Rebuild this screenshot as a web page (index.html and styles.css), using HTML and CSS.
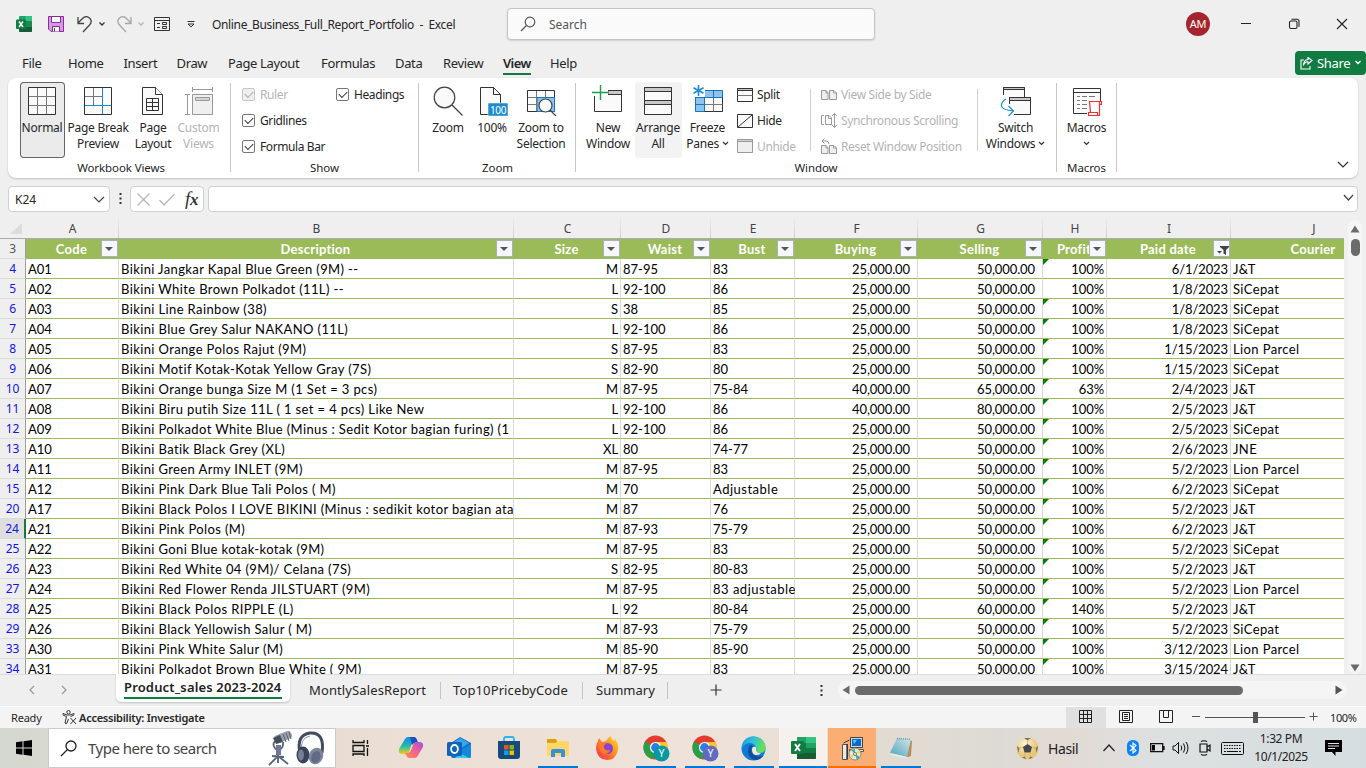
FILE: index.html
```html
<!DOCTYPE html>
<html lang="en">
<head>
<meta charset="utf-8">
<title>Online_Business_Full_Report_Portfolio - Excel</title>
<link rel="stylesheet" href="styles.css">
</head>
<body>
<header class="titlebar">
  <div class="quick">
    <svg class="q-excel" width="16" height="16" viewBox="0 0 16 16"><rect x="3" width="13" height="16" rx="1" fill="#21a366"/><path d="M9.500 0H15q1 0 1 1v4H9.500z" fill="#33c481"/><path d="M3 5h6.500v6H3z" fill="#107c41"/><path d="M9.500 5H16v6H9.500z" fill="#107c41" opacity=".55"/><path d="M3 11h13v4q0 1-1 1H4q-1 0-1-1z" fill="#185c37"/><rect y="3.500" width="10" height="9.500" rx="1" fill="#107c41"/><path d="M3 5.500l4 5.500M7 5.500L3 11" stroke="#fff" stroke-width="1.500"/></svg>
    <svg class="q-save" width="16" height="16" viewBox="0 0 16 16"><path d="M.5.5h15v15H3L.5 13z" fill="#d69adf" stroke="#8a2b9c"/><path d="M3.500.5h9v6h-9zM4.500 15.500v-5h7v5" fill="#fafafa" stroke="#8a2b9c"/><path d="M6.500 12v3.500" stroke="#8a2b9c"/></svg>
    <svg class="q-undo" width="16" height="17" viewBox="0 0 16 17" fill="none" stroke="#444" stroke-width="1.300"><path d="M1 1v6.500h6M1 7L5.500 2.500C8 0 11 0 13 2.500s1.500 4.500-.5 6.500L6 16"/></svg>
    <svg class="q-c1" width="8" height="6" viewBox="0 0 8 6" fill="none" stroke="#333" stroke-width="1.300"><path d="M1.500 1.500L4 4l2.500-2.500"/></svg>
    <svg class="q-redo" width="16" height="17" viewBox="0 0 16 17" fill="none" stroke="#a6a6a6" stroke-width="1.300"><path d="M14 1v6.500H8M14 7L9.500 2.500C7 0 4 0 2 2.500S.5 7 2.500 9L9 16"/></svg>
    <svg class="q-c2" width="8" height="6" viewBox="0 0 8 6" fill="none" stroke="#b5b5b5" stroke-width="1.300"><path d="M1.500 1.500L4 4l2.500-2.500"/></svg>
    <svg class="q-form" width="16" height="14" viewBox="0 0 16 14" fill="none" stroke="#333"><path d="M.5.5h15v13H.5zM.5 3.500h15M3 6.500h3M3 10.500h3M8.500 5.500h4v2h-4zM8.500 9.500h4v2h-4z"/></svg>
    <svg class="q-cust" width="8" height="7" viewBox="0 0 8 7" fill="none" stroke="#333"><path d="M.5.5h7M1 3l3 3 3-3z"/></svg>
    <span class="doc-title">Online_Business_Full_Report_Portfolio&nbsp; -&nbsp; Excel</span>
  </div>
  <div class="search"><svg width="16" height="16" viewBox="0 0 16 16" fill="none" stroke="#555" stroke-width="1.200"><circle cx="10" cy="6" r="4.800"/><path d="M6.500 9.500L1 15"/></svg><span>Search</span></div>
  <div class="win">
    <span class="avatar">AM</span>
    <svg class="wb" width="48" height="20" viewBox="0 0 48 20" fill="none" stroke="#222" stroke-width="1"><path d="M19 9.500h10"/></svg>
    <svg class="wb" width="48" height="20" viewBox="0 0 48 20" fill="none" stroke="#222" stroke-width="1.100"><rect x="19.500" y="7" width="7.500" height="7.500" rx="1.500"/><path d="M21.500 5.300H27q2 0 2 2v5.500"/></svg>
    <svg class="wb" width="48" height="20" viewBox="0 0 48 20" fill="none" stroke="#222" stroke-width="1.100"><path d="M19 5l10 10M29 5L19 15"/></svg>
  </div>
</header>

<nav class="tabs">
  <span class="tab w0">File</span><span class="tab w1">Home</span><span class="tab w2">Insert</span><span class="tab w3">Draw</span><span class="tab w4">Page Layout</span><span class="tab w5">Formulas</span><span class="tab w6">Data</span><span class="tab w7">Review</span><span class="tab w8 on">View</span><span class="tab w9">Help</span>
  <span class="share"><svg width="13" height="13" viewBox="0 0 13 13" fill="none" stroke="#fff" stroke-width="1.100"><path d="M4 3H1v9h9V9M3.500 8.500Q4 5 8 4.800V7l4-3.500L8 .5v2Q3.500 3 3.500 8.500z"/></svg>Share<svg width="8" height="6" viewBox="0 0 8 6" fill="none" stroke="#fff" stroke-width="1.300"><path d="M1.500 1L4 3.500 6.500 1"/></svg></span>
</nav>

<section class="ribbon">
  <div class="group g-views">
    <div class="tools">
      <div class="btn sel b45"><svg width="32" height="32" viewBox="0 0 32 32"><path d="M2.500 3.500h27v27h-27z" fill="#fafafa" stroke="#333"/><path d="M11.500 4v26M20.500 4v26M3 12.500h26M3 21.500h26" stroke="#777"/></svg><span>Normal</span></div>
      <div class="btn b66"><svg width="32" height="32" viewBox="0 0 32 32"><path d="M2.500 3.500h27v27h-27z" fill="#fafafa" stroke="#333"/><path d="M11.500 4v17M3 12.500h17" stroke="#777"/><path d="M20.500 4v26M3 21.500h26" stroke="#1e8bd0"/></svg><span>Page Break<br>Preview</span></div>
      <div class="btn b44"><svg width="32" height="32" viewBox="0 0 32 32" fill="#fafafa" stroke="#333"><path d="M5.500 3.500h13l7 7v20h-20z"/><path d="M18.500 3.500v7h7" /><path d="M9.500 14.500h12v12h-12zM9.500 18.500h12M9.500 22.500h12M15.500 14.500v12" fill="none"/></svg><span>Page<br>Layout</span></div>
      <div class="btn dis b47"><svg width="32" height="32" viewBox="0 0 32 32" fill="none" stroke="#999"><path d="M9.500 10.500h20v20h-20z" fill="#efefef"/><path d="M12.500 13.500h14v3h-14z" fill="#d5d5d5"/><path d="M9.500 5.500h20M9.500 3v5M29.500 3v5M4.500 10.500v20M2 10.500h5M2 30.500h5"/></svg><span>Custom<br>Views</span></div>
    </div>
    <div class="caption">Workbook Views</div>
  </div>
  <div class="group g-show">
    <div class="checks">
      <label class="ck off"><i></i>Ruler</label><label class="ck"><i></i>Headings</label>
      <label class="ck"><i></i>Gridlines</label><span></span>
      <label class="ck"><i></i>Formula Bar</label>
    </div>
    <div class="caption">Show</div>
  </div>
  <div class="group g-zoom">
    <div class="tools">
      <div class="btn b44"><svg width="32" height="32" viewBox="0 0 32 32" fill="#fafafa" stroke="#444" stroke-width="1.200"><circle cx="12.500" cy="13.500" r="10.300"/><path d="M20 21l10.500 10.500"/></svg><span>Zoom</span></div>
      <div class="btn b44"><svg width="32" height="32" viewBox="0 0 32 32"><path d="M4.500 3.500h13l7 7v20h-20z" fill="#fafafa" stroke="#333"/><path d="M17.500 3.500v7h7" fill="none" stroke="#333"/><rect x="12" y="19" width="20" height="13" fill="#1e8bcd" stroke="#fff" stroke-width=".5"/><text x="22" y="29.500" class="t100">100</text></svg><span>100%</span></div>
      <div class="btn b54"><svg width="32" height="32" viewBox="0 0 32 32"><path d="M2.500 6.500h27v21h-27z" fill="#fafafa" stroke="#333"/><path d="M12 13.500h17.500v14H12z" fill="#8fc3ee" stroke="#1476be"/><path d="M11.500 7v20M20.500 7v7M3 13.500h8M3 20.500h8" stroke="#777" /><circle cx="20.500" cy="21.500" r="6.500" fill="#fafafa" stroke="#444" stroke-width="1.200"/><path d="M25 26l6 6" stroke="#444" stroke-width="1.300"/></svg><span>Zoom to<br>Selection</span></div>
    </div>
    <div class="caption">Zoom</div>
  </div>
  <div class="group g-window">
    <div class="tools">
      <div class="btn b50"><svg width="32" height="32" viewBox="0 0 32 32"><path d="M2.500 6.500h27v21h-27z" fill="#fafafa" stroke="#333"/><path d="M16 6.500h13.500v4H16z" fill="#c8c8c8" stroke="#333"/><path d="M0 0h16v12H0z" fill="#fff"/><path d="M2.500 12v4" stroke="#333"/><path d="M8.500 1v15M0 8.500h16" stroke="#1aa04a" stroke-width="1.400"/></svg><span>New<br>Window</span></div>
      <div class="btn hov b47"><svg width="32" height="32" viewBox="0 0 32 32" fill="#fafafa" stroke="#333"><path d="M2.500 3.500h27v13h-27zM2.500 16.500h27v14h-27z"/><path d="M2.500 3.500h27v4h-27zM2.500 16.500h27v4h-27z" fill="#c8c8c8"/></svg><span>Arrange<br>All</span></div>
      <div class="btn b52"><svg width="32" height="32" viewBox="0 0 32 32"><path d="M3.500 6.500h27v21h-27z" fill="#8fc3ee" stroke="#1476be"/><path d="M12.500 13.500h18v14h-18z" fill="#fafafa" stroke="#333"/><path d="M21.500 13.500v14M12.500 20.500h18" stroke="#777"/><path d="M21.500 6.500v7M3.500 13.500h27M3.500 20.500h9M12.500 7v20" stroke="#1476be" fill="none"/><path d="M0 0h13v13H0z" fill="#fff"/><path d="M6.500 1v11M1.500 3.800l10 5.500M11.500 3.800l-10 5.500" stroke="#1e8bd0" stroke-width="1.600"/></svg><span>Freeze<br>Panes <svg class="cv" width="7" height="5" viewBox="0 0 7 5"><path d="M1 1l2.500 2.500L6 1"/></svg></span></div>
      <div class="list l-split">
        <div><svg width="16" height="16" viewBox="0 0 16 16" fill="#fafafa" stroke="#333"><path d="M.5 1.500h15v13H.5z"/><path d="M.5 1.500h15v2H.5z" fill="#c8c8c8"/><path d="M.5 8.500h15" stroke="#777"/></svg>Split</div>
        <div><svg width="16" height="16" viewBox="0 0 16 16" fill="#fafafa" stroke="#333"><path d="M.5 1.500h15v13H.5zM1 14L15 2"/></svg>Hide</div>
        <div class="dis"><svg width="16" height="16" viewBox="0 0 16 16" fill="#efefef" stroke="#999"><path d="M.5 1.500h15v13H.5z"/><path d="M.5 1.500h15v2H.5z" fill="#d0d0d0"/></svg>Unhide</div>
      </div>
      <div class="list l-side dis">
        <div><svg width="16" height="16" viewBox="0 0 16 16" fill="#efefef" stroke="#999"><path d="M.5 3.500H5l2 2v7H.5zM8.500 3.500H13l2.500 2.500v6.500h-7zM5 3.500V6h2M12.500 3.500V6h3"/></svg>View Side by Side</div>
        <div><svg width="16" height="16" viewBox="0 0 16 16" fill="none" stroke="#999"><path d="M3 2.500H.5v9H3M4.500 2.500H8L10.500 5v6.500h-6zM7.500 2.500v3h3M13.500.5v14M11 3l2.500-2.500L16 3M11 12l2.500 2.500L16 12"/></svg>Synchronous Scrolling</div>
        <div><svg width="16" height="16" viewBox="0 0 16 16" fill="#efefef" stroke="#999"><path d="M.5 7.500H5l2 2v6H.5zM8.500 7.500H13l2.500 2.500v5.500h-7zM5 7.500V10h2M12.500 7.500V10h3"/><path d="M3.500.5L1 3l2.500 2.500M1 3h4q3 0 3 3" fill="none"/></svg>Reset Window Position</div>
      </div>
      <div class="btn b77"><svg width="32" height="32" viewBox="0 0 32 32"><path d="M3.500 3.500h21v12h-21z" fill="#fafafa" stroke="#333"/><path d="M3.500 3.500h21v2h-21z" fill="#c8c8c8" stroke="#333"/><path d="M0 11h9v20H0z" fill="#fff"/><path d="M9.500 13.500h21v17h-21z" fill="#fafafa" stroke="#333"/><path d="M9.500 13.500h21v3h-21z" fill="#c8c8c8" stroke="#333"/><path d="M8 20h6v12H8z" fill="#fff"/><path d="M6 15Q1 18 1.500 22t12 5M8.500 22l5 5-5 5" fill="none" stroke="#1e8bd0" stroke-width="1.200"/></svg><span>Switch<br>Windows <svg class="cv" width="7" height="5" viewBox="0 0 7 5"><path d="M1 1l2.500 2.500L6 1"/></svg></span></div>
    </div>
    <div class="caption">Window</div>
  </div>
  <div class="group g-macros">
    <div class="tools">
      <div class="btn b59"><svg width="32" height="32" viewBox="0 0 32 32"><path d="M2.500 4.500h27v25h-27z" fill="#fafafa" stroke="#333"/><path d="M2.500 8.500h27" stroke="#333"/><path d="M6 12.500h3M11 12.500h5M18 12.500h6M6 16.500h3M11 16.500h5M6 20.500h3M11 20.500h5M6 24.500h3M11 24.500h5" stroke="#777"/><path d="M16 27h16v6H16zM28 17h4v12h-4z" fill="#fff"/><path d="M18.500 17.500h12v3h-2v11h-11v-3h2z M28.500 20V17.500M17.500 28.500h9v3" fill="#fff" stroke="#e33" stroke-width="1.200"/></svg><span>Macros<br><svg class="cv" width="7" height="5" viewBox="0 0 7 5"><path d="M1 1l2.500 2.500L6 1"/></svg></span></div>
    </div>
    <div class="caption">Macros</div>
  </div>
  <svg class="collapse" width="12" height="7" viewBox="0 0 12 7" fill="none" stroke="#333" stroke-width="1.200"><path d="M1 1l5 5 5-5"/></svg>
</section>

<section class="formula">
  <div class="namebox"><span>K24</span><svg width="12" height="7" viewBox="0 0 12 7" fill="none" stroke="#444" stroke-width="1.200"><path d="M1 1l5 5 5-5"/></svg></div>
  <svg class="fdots" width="3" height="12" viewBox="0 0 3 12" fill="#333"><path d="M.5 0h2v2h-2zM.5 4.500h2v2h-2zM.5 9h2v2h-2z"/></svg>
  <div class="fbtns"><svg width="13" height="13" viewBox="0 0 13 13" stroke="#b5b5b5" stroke-width="1.200"><path d="M.5.5l12 12M12.500.5l-12 12"/></svg><svg width="16" height="13" viewBox="0 0 16 13" fill="none" stroke="#b5b5b5" stroke-width="1.200"><path d="M.5 7L5 12 15.500 1"/></svg><span class="fx"><em>f</em>x</span></div>
  <div class="finput"><svg width="12" height="7" viewBox="0 0 12 7" fill="none" stroke="#444" stroke-width="1.200"><path d="M1 1l4.500 5L10 1"/></svg></div>
</section>

<main class="sheet">
  <div class="view"><table class="grid" id="grid">
    <colgroup><col class="cR"><col class="cA"><col class="cB"><col class="cC"><col class="cD"><col class="cE"><col class="cF"><col class="cG"><col class="cH"><col class="cI"><col class="cJ"></colgroup>
    <thead>
      <tr class="letters"><th><svg width="12" height="12" viewBox="0 0 12 12"><path d="M12 0v11H0z" fill="#dcdcdc"/></svg></th><th>A</th><th>B</th><th>C</th><th>D</th><th>E</th><th>F</th><th>G</th><th>H</th><th>I</th><th>J</th></tr>
    </thead>
    <tbody></tbody>
  </table></div>
  <div class="vscroll"><svg width="10" height="8" viewBox="0 0 10 8"><path d="M5 .5L9.500 7.500h-9z" fill="#6b6b6b"/></svg><i></i><svg class="dn" width="10" height="8" viewBox="0 0 10 8"><path d="M5 7.500L9.500.5h-9z" fill="#6b6b6b"/></svg></div>
</main>

<section class="sheettabs">
  <div class="arrows"><svg width="8" height="10" viewBox="0 0 8 10"><path d="M6 1L2 5l4 4"/></svg><svg width="8" height="10" viewBox="0 0 8 10"><path d="M2 1l4 4-4 4"/></svg></div>
  <div class="st act"><span>Product_sales 2023-2024</span></div>
  <div class="st s1">MontlySalesReport</div><div class="st s2">Top10PricebyCode</div><div class="st s3">Summary</div>
  <svg class="plus" width="12" height="12" viewBox="0 0 12 12" stroke="#333" stroke-width="1.200"><path d="M6 .5v11M.5 6h11"/></svg>
  <svg class="hdots" width="3" height="12" viewBox="0 0 3 12" fill="#333"><path d="M.5 0h2v2h-2zM.5 4.500h2v2h-2zM.5 9h2v2h-2z"/></svg>
  <div class="hscroll"><svg width="8" height="10" viewBox="0 0 8 10"><path d="M7.500.5v9L.5 5z" fill="#6b6b6b"/></svg><i></i><svg class="rt" width="8" height="10" viewBox="0 0 8 10"><path d="M.5.5v9L7.500 5z" fill="#555"/></svg></div>
</section>

<footer class="status">
  <span class="ready">Ready</span>
  <svg class="acc" width="15" height="15" viewBox="0 0 15 15" fill="none" stroke="#333"><circle cx="6.500" cy="2.200" r="1.700"/><path d="M1 3.500q-.5 1.500 1 2l2.500 1L3 13q1 1.500 2 0l1.500-4M12 3.500q.5 1.500-1 2L8.500 6.500M1 3.500l4 1.500h3l4-1.500M8.500 8l5.500 6M14 8l-5.500 6"/></svg>
  <span class="acct">Accessibility: Investigate</span>
  <div class="vbtns">
    <span class="vb on"><svg width="13" height="13" viewBox="0 0 13 13" fill="none" stroke="#222"><path d="M.5.5h12v12H.5zM4.500 1v11M8.500 1v11M1 4.500h11M1 8.500h11"/></svg></span>
    <span class="vb"><svg width="14" height="13" viewBox="0 0 14 13" fill="none" stroke="#222"><path d="M.5.5h13v12H.5zM3.500 2.500h7v8h-7zM5 4.500h4M5 6.500h4M5 8.500h4"/></svg></span>
    <span class="vb"><svg width="14" height="13" viewBox="0 0 14 13" fill="none" stroke="#222"><path d="M.5.5h13v12H.5zM4.500.5v7h5v-7"/></svg></span>
  </div>
  <svg class="zs" width="130" height="13" viewBox="0 0 130 13"><path d="M1 5.500h8M14 6.500h100M118.500 5.500h8M122.500 1.500v8" stroke="#555"/><rect x="62" y="1" width="5" height="11" fill="#555"/></svg>
  <span class="zp">100%</span>
</footer>

<div class="taskbar">
  <span class="start"><svg width="16" height="16" viewBox="0 0 16 16"><path d="M0 2.200L6.500 1.300V7.500H0zM7.500 1.200L16 0v7.500H7.500zM0 8.500h6.500v6.200L0 13.800zM7.500 8.500H16V16l-8.500-1.200z"/></svg></span>
  <div class="tsearch">
    <svg width="17" height="17" viewBox="0 0 17 17" fill="none" stroke="#222" stroke-width="1.300"><circle cx="11" cy="6" r="5"/><path d="M7.500 9.500L1 16"/></svg>
    <span>Type here to search</span>
    <svg class="gear" width="60" height="38" viewBox="0 0 60 38"><path d="M12 17v17M3 36l9-9 10 8M6 27l12 1M9 12q-4 5 3 10 6-3 5-9" fill="none" stroke="#5a6378" stroke-width="1.800"/><path d="M10 16h5v10h-5z" fill="#6f7890"/><rect x="8" y="4" width="18" height="8" rx="3" transform="rotate(-22 17 8)" fill="#9aa1ad"/><path d="M7 9l7-3 3 7-7 2z" fill="#454c5c"/><path d="M17 5l3 8M20 4l3 8M23 3l2 7" stroke="#5b6270"/><path d="M34 24Q30 6 44 4q15-1 12 20" fill="none" stroke="#424b60" stroke-width="3"/><path d="M36 24Q33 9 44 7" fill="none" stroke="#8791a6" stroke-width="1"/><ellipse cx="37" cy="26" rx="6.500" ry="8.500" fill="#3a435a"/><ellipse cx="35" cy="26" rx="3" ry="5.500" fill="#767f96"/><ellipse cx="50" cy="27" rx="7" ry="8.500" transform="rotate(20 50 27)" fill="#7c86a0"/><ellipse cx="50" cy="28" rx="4.500" ry="6" transform="rotate(20 50 28)" fill="#616b84"/></svg>
  </div>
  <span class="tb first"><svg width="18" height="16" viewBox="0 0 18 16" fill="none" stroke="#111" stroke-width="1.300"><path d="M1 0v2.500h11V0M1 5.500h11v6H1zM1 16v-2h11v2M15.500 0v4M15.500 8v8M14 6h3"/></svg></span>
  <span class="tb"><svg width="26" height="24" viewBox="0 0 26 24"><defs><linearGradient id="ca" x1="0" y1="0" x2="0" y2="1"><stop offset="0" stop-color="#1789e8"/><stop offset=".5" stop-color="#20b8b0"/><stop offset="1" stop-color="#f0cf18"/></linearGradient><linearGradient id="cb" x1="1" y1="0" x2="0" y2="1"><stop offset="0" stop-color="#a54de8"/><stop offset=".5" stop-color="#f0628e"/><stop offset="1" stop-color="#ff9048"/></linearGradient></defs><path d="M7 3q1-2 3-2h6q2 0 3 3l1 3h-3q-3 0-4 3l-2 6q-1 2-3 2H4q-4 0-3-5z" fill="url(#ca)"/><path d="M12 1h4q2 0 3 3l1 3h-3q-2 0-3 2z" fill="#1b50bd"/><path d="M19 21q-1 1-3 1h-5q-2 0-3-3l-1-2h3q2 0 3-3l2-5q1-3 3-3h3q5 0 4 5z" fill="url(#cb)"/></svg></span>
  <span class="tb"><svg width="25" height="24" viewBox="0 0 25 24"><path d="M4 7l9-6 11 6v13q0 2-2 2H7q-3 0-3-2z" fill="#1272c6"/><path d="M6 7l7-5 9 5-9 6z" fill="#33a7ee"/><path d="M24 8v12q0 2-2 2H8z" fill="#38c6ef"/><path d="M24 8L11 16l11 6q2 0 2-2z" fill="#1587dd"/><rect y="6" width="15" height="14" rx="1.500" fill="#0f64b9"/><ellipse cx="7.500" cy="13" rx="3.400" ry="4" fill="none" stroke="#fff" stroke-width="1.800"/></svg></span>
  <span class="tb"><svg width="24" height="24" viewBox="0 0 24 24"><path d="M7 6V3q0-2 2-2h6q2 0 2 2v3" fill="none" stroke="#2bb5ef" stroke-width="1.800"/><path d="M1 5h22v15q0 3-3 3H4q-3 0-3-3z" fill="#174a7c"/><path d="M7 9h4.500v4.500H7z" fill="#f25022"/><path d="M12.500 9H17v4.500h-4.500z" fill="#7fba00"/><path d="M7 14.500h4.500V19H7z" fill="#00a4ef"/><path d="M12.500 14.500H17V19h-4.500z" fill="#ffb900"/></svg></span>
  <span class="tb run"><svg width="24" height="22" viewBox="0 0 24 22"><path d="M1 3q0-1 1-1h8l2 2h10q1 0 1 1v14H1z" fill="#ffd667"/><path d="M1 3q0-1 1-1h8l1 2-1 2H1z" fill="#dfa00b"/><path d="M5 20v-6q0-2 2-2h10q2 0 2 2v6h-4v-4H9v4z" fill="#3990da"/></svg></span>
  <span class="tb"><svg width="24" height="24" viewBox="0 0 24 24"><defs><linearGradient id="ff" x1="1" y1="0" x2="0" y2="1"><stop offset="0" stop-color="#ffe226"/><stop offset=".45" stop-color="#ff8b1d"/><stop offset="1" stop-color="#f7245f"/></linearGradient></defs><path d="M3 5l1-3 3 4 4-1q2-4 5-5 0 4 3 5l1-2q4 5 3 11-2 10-11 10Q2 23 1 13q0-5 2-8z" fill="url(#ff)"/><circle cx="12.500" cy="12.500" r="5.500" fill="#8544d8"/><path d="M4 8q4-2 7 0-3 1-2 4 1 3 6 2-1 4-6 4-5-2-5-10z" fill="#ff7a24"/></svg></span>
  <span class="tb run nudge"><svg width="27" height="27" viewBox="0 0 27 27"><circle cx="12.500" cy="12.500" r="12" fill="#e33b2e"/><path d="M12.500 12.500L2 6.500a12 12 0 0 0 8.500 17.800z" fill="#26a148"/><path d="M12.500 7H23.300a12 12 0 0 1-11 17.500L18 15z" fill="#fdc62c"/><circle cx="12.500" cy="12.500" r="5.600" fill="#fff"/><circle cx="12.500" cy="12.500" r="4.400" fill="#2b7de9"/><circle cx="18.500" cy="18.500" r="8" fill="#0a98a2"/><text x="18.500" y="22" class="ty">Y</text></svg></span>
  <span class="tb run nudge"><svg width="27" height="27" viewBox="0 0 27 27"><circle cx="12.500" cy="12.500" r="12" fill="#e33b2e"/><path d="M12.500 12.500L2 6.500a12 12 0 0 0 8.500 17.800z" fill="#26a148"/><path d="M12.500 7H23.300a12 12 0 0 1-11 17.500L18 15z" fill="#fdc62c"/><circle cx="12.500" cy="12.500" r="5.600" fill="#fff"/><circle cx="12.500" cy="12.500" r="4.400" fill="#2b7de9"/><circle cx="18.500" cy="18.500" r="8" fill="#5e6bc0"/><text x="18.500" y="22" class="ty">Y</text></svg></span>
  <span class="tb run"><svg width="25" height="25" viewBox="0 0 25 25"><defs><linearGradient id="ed" x1="0" y1="0" x2="1" y2=".3"><stop offset="0" stop-color="#1795dd"/><stop offset=".5" stop-color="#2cc4dc"/><stop offset="1" stop-color="#66e056"/></linearGradient></defs><circle cx="12.500" cy="12.500" r="12" fill="#0f7bd7"/><path d="M1 10Q3 .5 12.500.5 23 1 24.500 11q0 6-6 6-5 0-3-4Q14 7 9 7 4 7 1 12z" fill="url(#ed)"/><path d="M9 9q-5 8 2 14 7 3 12-4-5 3-10 0-5-4-1-9z" fill="#124e9c"/><path d="M12 11q4-1 3 3 0 3 5 3.500-5 3-8 0-2-4 0-6.500z" fill="#f5e9e2"/></svg></span>
  <span class="tb run full xl"><svg width="25" height="24" viewBox="0 0 25 24"><path d="M6 1h18q1 0 1 1v20q0 1-1 1H6z" fill="#21a366"/><path d="M15 1h9q1 0 1 1v5H15z" fill="#33c481"/><path d="M6 7h9v10H6zM15 12h10v5H15z" fill="#107c41"/><path d="M6 17h19v5q0 1-1 1H6z" fill="#185c37"/><rect y="5" width="13" height="13" rx="1" fill="#107c41"/><path d="M4 8l5 7M9 8l-5 7" stroke="#fff" stroke-width="1.800"/></svg></span>
  <span class="tb run full warn"><svg width="26" height="25" viewBox="0 0 26 25"><path d="M10.500 1.500h12v10h-12z" fill="#d8d5c8" stroke="#444"/><path d="M12 3h9v7h-9z" fill="#0868d8"/><path d="M13 4h4l-3 4z" fill="#46d7ff"/><path d="M9.500 13.500h14v2h-14z" fill="#eee" stroke="#555"/><path d="M2.500 8.500h5v15h-5z" fill="#e9e9e9" stroke="#555"/><path d="M3.500 7l6-3" stroke="#333"/><path d="M7 8v15" stroke="#222" stroke-width="1.200"/><circle cx="15" cy="18" r="6" fill="#e6e9dc" stroke="#888"/><path d="M15 18l-4-4 4-1zM15 18l5 3-3 3z" fill="#39ad9f"/><path d="M15 18l4-4 1 3zM15 18l-5 1 2 3z" fill="#e8dc4f"/><circle cx="15" cy="18" r="1.500" fill="#fff" stroke="#777"/></svg></span>
  <span class="tb run np"><svg width="26" height="24" viewBox="0 0 26 24"><defs><linearGradient id="np" x1="1" y1="0" x2="0" y2="1"><stop offset="0" stop-color="#cfe6ea"/><stop offset="1" stop-color="#4fa3b8"/></linearGradient></defs><path d="M22 4l2 1-1 15-6 2z" fill="#b88b58"/><path d="M9 2l14 1-4 18L2 17z" fill="url(#np)"/><path d="M2 17l17 4 1 1.500L3 19z" fill="#e4edef"/><path d="M9 2.500l14 .8" stroke="#8d9698" stroke-width="1.500" stroke-dasharray="1 1"/></svg></span>
  <div class="tray">
    <svg class="ball" width="23" height="23" viewBox="0 0 23 23"><defs><radialGradient id="bl" cx=".4" cy=".3"><stop offset="0" stop-color="#fff6dc"/><stop offset="1" stop-color="#e8c878"/></radialGradient></defs><circle cx="11.500" cy="11.500" r="11" fill="url(#bl)"/><path d="M11.500 7l4.500 3-1.500 5.500h-6L7 10z" fill="#45484c"/><path d="M8 1h7l-3.500 2.500zM.8 9l2.700 2-1 5zM22.200 9l-2.700 2 1 5zM6 20.500l3-1 1 2.800zM17 20.500l-3-1-1 2.800z" fill="#77756e"/><path d="M11.500 3.500V7M3.500 11l3.500-1M19.500 11L16 10M9 19.500v-4M14 19.500v-4" stroke="#c9b06e" stroke-width=".8"/></svg>
    <span class="hasil">Hasil</span>
    <svg class="up" width="12" height="8" viewBox="0 0 12 8" fill="none" stroke="#222" stroke-width="1.300"><path d="M.5 7L6 1l5.500 6"/></svg>
    <svg class="bt" width="12" height="16" viewBox="0 0 12 16"><rect width="12" height="16" rx="5.500" fill="#0a84f5"/><path d="M3 5l6 5.500-3 2.500V3l3 2.500L3 11" fill="none" stroke="#fff" stroke-width="1.100"/></svg>
    <svg class="bat" width="15" height="10" viewBox="0 0 15 10"><path d="M.7.7h12v8H.7zM14 3v4" fill="none" stroke="#111" stroke-width="1.300"/><path d="M2 2h3v5.500H2z"/></svg>
    <svg class="snd" width="17" height="14" viewBox="0 0 17 14" fill="none" stroke="#111"><path d="M1 5h2l3.500-3.500v11L3 9H1zM9 4.500q1.500 2.500 0 5M11.500 2.500q3 4.500 0 9M14 1q4 6 0 12"/></svg>
    <svg class="cam" width="12" height="16" viewBox="0 0 12 16" fill="none" stroke="#111" stroke-width="1.200"><path d="M1 4h7v8H1zM8 7l3-2v6L8 9M2 1.500q3-1.500 6 0M2 14.500q3 1.500 6 0"/></svg>
    <svg class="kb" width="23" height="13" viewBox="0 0 23 13" fill="none" stroke="#111"><rect x=".5" y=".5" width="22" height="12" rx="1"/><path d="M3 3.500h17M3 6.500h17" stroke-dasharray="1.500 1"/><path d="M3 9.500h2M6 9.500h11M18 9.500h2"/></svg>
    <span class="clock">1:32 PM<br>10/1/2025</span>
    <svg class="note" width="17" height="16" viewBox="0 0 17 16"><path d="M0 0h17v12h-6.500v4l-3.500-4H0z"/><path d="M3 3.500h11M3 6h11M3 8.500h7" stroke="#dfe3e5"/></svg>
  </div>
</div>
<script src="script.js"></script>
</body>
</html>
```
FILE: styles.css
```css
* { box-sizing: border-box; }
body { margin: 0; width: 1366px; height: 768px; overflow: hidden; background: #efefef; font-family: "Noto Sans", "Open Sans", sans-serif; font-size: 12px; color: #262626; display: flex; flex-direction: column; }
svg { display: block; flex: none; }
span { white-space: nowrap; }

.titlebar { height: 48px; display: flex; align-items: center; flex: none; }
.quick { width: 507px; display: flex; align-items: center; padding-left: 16px; }
.q-save { margin-left: 16px; }
.q-undo { margin-left: 13px; }
.q-c1 { margin-left: 5px; }
.q-redo { margin-left: 11px; }
.q-c2 { margin-left: 4px; }
.q-form { margin-left: 9px; }
.q-cust { margin-left: 17px; }
.doc-title { margin-left: 17px; font-size: 12px; letter-spacing: -.35px; }
.search { width: 368px; height: 32px; border: 1px solid #c4c4c4; border-radius: 4px; background: #fafafa; display: flex; align-items: center; padding-left: 12px; gap: 13px; color: #555; box-shadow: 0 1px 2px #0002; }
.win { display: flex; align-items: center; padding-left: 311px; }
.avatar { width: 24px; height: 24px; border-radius: 50%; background: #a4262c; color: #fff; font-size: 11px; line-height: 24px; text-align: center; letter-spacing: -.3px; }
.avatar + .wb { margin-left: 12px; }

.tabs { height: 30px; flex: none; display: flex; font-size: 13px; letter-spacing: -.36px; padding-left: 22px; }
.tab { height: 27px; line-height: 31px; }
.w0 { width: 46px; } .w1 { width: 55.500px; } .w2 { width: 53px; } .w3 { width: 51.500px; } .w4 { width: 93px; } .w5 { width: 74px; } .w6 { width: 48px; } .w7 { width: 60px; } .w8 { width: 28px; margin-right: 19px; }
.tab.on { font-weight: 600; border-bottom: 2px solid #107c41; letter-spacing: -.6px; }
.share { margin: 3px 0 0 auto; width: 71px; height: 24px; border-radius: 4px; background: #107c41; color: #fff; display: flex; align-items: center; gap: 4px; padding-left: 5px; }

.ribbon { margin: 0 8px; height: 100px; flex: none; background: #fff; border-radius: 8px; display: flex; position: relative; box-shadow: 0 1px 2px #0003; letter-spacing: -.25px; }
.group { height: 89px; margin-top: 5px; border-right: 1px solid #c8c8c8; display: flex; flex-direction: column; }
.tools { display: flex; height: 77px; margin-top: -1px; flex: none; }
.caption { text-align: center; line-height: 16px; margin-top: 1px; font-size: 11.500px; letter-spacing: -.1px; }
.g-views { width: 223px; padding-left: 12px; } .g-views .caption { padding-right: 8px; }
.g-show { width: 188px; }
.g-zoom { width: 157px; padding-left: 7px; } .g-zoom .caption { padding-right: 6px; }
.g-window { width: 481px; padding-left: 7px; } .g-window .caption { padding-right: 7px; }
.g-macros { width: 60px; }
.btn { height: 76px; display: flex; flex-direction: column; align-items: center; text-align: center; line-height: 16px; padding-top: 2px; border-radius: 4px; }
.g-views .btn, .g-window .btn { padding-right: 1px; }
.g-window .b50, .g-window .b77 { padding-right: 2px; }
.btn span { margin-top: 4px; }
.sel { background: #ebebeb; box-shadow: inset 0 0 0 1px #666; }
.hov { background: #f3f3f3; }
.dis, .off { color: #b4b4b4; }
.b44 { width: 44px; } .b45 { width: 45px; } .b47 { width: 47px; } .b50 { width: 52px; } .b52 { width: 52px; } .b54 { width: 54px; } .b59 { width: 59px; } .b66 { width: 67px; } .b77 { width: 77px; }
.g-views .b66 + .b44 { margin-left: -.5px; }
.cv { display: inline-block; vertical-align: 2px; fill: none; stroke: #333; stroke-width: 1.200; }
.t100 { font-size: 10px; fill: #fff; text-anchor: middle; letter-spacing: -.4px; }
.ty { font: 10px Roboto, sans-serif; fill: #fff; text-anchor: middle; }
.checks { display: grid; grid-template-columns: 94px 80px; grid-auto-rows: 26px; height: 78px; margin-top: -2px; padding-left: 11px; flex: none; }
.ck { display: flex; align-items: center; gap: 5px; white-space: nowrap; letter-spacing: -.4px; }
.ck i { width: 13px; height: 13px; border: 1px solid #777; border-radius: 2px; position: relative; flex: none; }
.ck i::after { content: ""; position: absolute; left: 2px; top: 2px; width: 7px; height: 4px; border: solid #333; border-width: 0 0 1.300px 1.300px; transform: rotate(-45deg); }
.off i { border-color: #c5c5c5; background: #efefef; }
.off i::after { border-color: #aaa; }
.list { display: flex; flex-direction: column; letter-spacing: -.36px; }
.list div { height: 26px; display: flex; align-items: center; gap: 4px; white-space: nowrap; }
.l-split { width: 74px; margin-left: 3px; background: linear-gradient(#d0d0d0, #d0d0d0) right 7px / 1px 62px no-repeat; }
.l-side { width: 167px; padding-left: 10px; background: linear-gradient(#d0d0d0, #d0d0d0) right 7px / 1px 62px no-repeat; }
.collapse { position: absolute; right: 9px; bottom: 10px; }

.formula { display: flex; height: 26px; margin: 8px 8px 0; flex: none; align-items: center; }
.namebox { width: 102px; height: 26px; border: 1px solid #cfcfcf; border-radius: 4px; background: #fff; display: flex; align-items: center; justify-content: space-between; padding: 0 4px 0 6px; }
.fdots { margin: 0 8px 0 9px; }
.fbtns { width: 74px; height: 26px; border: 1px solid #cfcfcf; border-radius: 4px; background: #fff; display: flex; align-items: center; gap: 9px; padding-left: 6px; }
.fx { font: italic bold 17px/20px "Liberation Serif", serif; letter-spacing: -.3px; margin-left: 1px; color: #333; }
.fx em { font-weight: normal; font-size: 19px; }
.finput { flex: 1; height: 26px; margin-left: 4px; border: 1px solid #cfcfcf; border-radius: 4px; background: #fff; display: flex; align-items: center; justify-content: flex-end; padding: 0 2px 3px 0; }

.sheet { height: 462px; flex: none; display: flex; }
.view { width: 1344px; height: 462px; overflow: hidden; }
.grid { table-layout: fixed; width: 1397px; border-collapse: separate; border-spacing: 0; font: 13px/18px Lato, sans-serif; color: #000; }
.cR { width: 26px; } .cA { width: 93px; } .cB { width: 395px; } .cC { width: 107px; } .cD { width: 90px; } .cE { width: 84px; } .cF { width: 123px; } .cG { width: 125px; } .cH { width: 64px; } .cI { width: 124px; } .cJ { width: 166px; }
.grid td, .grid th { padding: 0 2px; height: 20px; overflow: hidden; white-space: nowrap; }
.grid .letters th { height: 27px; border-bottom: 1px solid #ababab; font: 12px/17px "Noto Sans", sans-serif; color: #444; vertical-align: bottom; padding-bottom: 1px; background: linear-gradient(#efefef, #cfcfcf) right bottom / 1px 22px no-repeat; }
.grid .letters th:first-child { background: none; }
.letters th svg { margin: 0 0 2px 8px; }
.grid .rn { padding: 0; border-right: 1px solid #9f9f9f; border-bottom: 1px solid #dcdcdc; background: #efefef; color: #1414e6; text-align: center; font: 12px/19px "Noto Sans", sans-serif; letter-spacing: -.2px; }
.grid .head .rn { color: #555; }
.grid .cur { background: #dedede; border-right: 2px solid #107c41; }
.grid .hd { background: #9bbb59; color: #fff; font-weight: 700; text-align: center; position: relative; letter-spacing: .25px; padding-right: 4px; }
.hd b { position: absolute; right: 1px; top: 1px; width: 17px; height: 17px; border: 1px solid #aab0bb; background: #f5f7fa; }
.hd b svg { margin: 5px 0 0 3px; }
.row td { background: #fff; border-bottom: 1px solid #9bbb59; border-right: 1px solid #d9d9d9; position: relative; }
.row .w { letter-spacing: .38px; }
.row .e { letter-spacing: .5px; }
.row .r { text-align: right; letter-spacing: -.1px; }
.row .m { text-align: right; padding-right: 7px; letter-spacing: -.1px; }
.row .s { overflow: visible; z-index: 1; }
.row .flag::before { content: ""; position: absolute; left: 0; top: 0; border-left: 6px solid #0a7a0a; border-bottom: 6px solid transparent; }
.vscroll { width: 14px; margin: 8px 0 0 4px; background: #f5f5f5; border-radius: 7px; display: flex; flex-direction: column; align-items: center; padding-top: 5px; height: 454px; }
.vscroll i { width: 9px; height: 17px; border-radius: 5px; background: #6b6b6b; margin-top: 6px; }
.vscroll .dn { margin-top: auto; margin-bottom: 2px; }

.sheettabs { height: 32px; flex: none; display: flex; border-top: 1px solid #dcdcdc; font-size: 13px; }
.arrows { width: 116px; padding: 10px 0 0 28px; display: flex; gap: 24px; }
.arrows svg { fill: none; stroke: #9a9a9a; stroke-width: 1.200; }
.st { height: 17px; line-height: 17px; margin-top: 7px; border-right: 1px solid #c4c4c4; white-space: nowrap; letter-spacing: .12px; }
.st.act { width: 174px; height: 28px; margin-top: -1px; background: #fff; border: 0; border-radius: 0 0 5px 5px; box-shadow: 0 1px 2px #0003; padding: 4px 0 0 8px; font-weight: 600; color: #222; }
.act span { display: block; width: 158px; height: 21px; border-bottom: 2px solid #107c41; line-height: 19px; letter-spacing: .15px; }
.s1 { width: 151px; padding-left: 19px; } .s2 { width: 142px; padding-left: 12px; } .s3 { width: 85px; padding-left: 13px; letter-spacing: 0; }
.plus { margin: 9px 0 0 42px; }
.hdots { margin: 10px 0 0 98px; }
.hscroll { margin: 6px 0 0 15px; width: 509px; height: 18px; border-radius: 9px; background: #f5f5f5; display: flex; align-items: center; padding: 0 4px; }
.hscroll i { width: 388px; height: 9px; border-radius: 5px; background: #6b6b6b; margin-left: 5px; }
.hscroll .rt { margin-left: auto; }

.status { height: 22px; flex: none; border-top: 1px solid #fff; background: #f4f4f4; display: flex; align-items: center; font-size: 11px; letter-spacing: -.2px; }
.ready { margin-left: 11px; width: 51px; }
.acct { margin-left: 2px; font-weight: 600; letter-spacing: -.25px; }
.vbtns { display: flex; margin-left: auto; }
.vb { width: 40px; height: 21px; display: flex; align-items: center; justify-content: center; padding: 0 1px 2px 0; }
.vb.on { background: #e0e0e0; }
.zs { margin-left: 5px; }
.zp { margin: 0 9px 0 9px; width: 27px; letter-spacing: -.4px; }

.taskbar { height: 40px; flex: none; display: flex; background: linear-gradient(90deg, #d4d8d0 0, #e5dacf 200px, #ecdfd5 420px, #efe2da 700px, #e2dbd2 880px, #dddad5 1000px, #e3dad4 1060px, #dce0e0 1160px, #d5dde0 1366px); color: #222; }
.start { width: 48px; padding: 12px 0 0 16px; }
.tsearch { width: 288px; background: #fff; border: 1px solid #ccc; display: flex; align-items: center; padding-left: 11px; font-size: 15px; color: #444; }
.tsearch span { margin-left: 11px; width: 178px; letter-spacing: -.5px; }
.tb { width: 49px; height: 40px; display: flex; align-items: center; justify-content: center; position: relative; }
.tb.first { width: 50px; }
.nudge { padding-left: 2px; }
.run::after { content: ""; position: absolute; left: 5px; right: 4px; bottom: 0; height: 2px; background: #0078d7; }
.full::after { left: 0; right: 1px; }
.full { background: linear-gradient(#f7f1ed, #f7f1ed) 0 0 / 48px 100% no-repeat; }
.xl { margin-left: 1px; }
.warn { background: linear-gradient(#faae74, #faae74) 0 0 / 48px 100% no-repeat; }
.warn::after { background: #f76d00; }
.np { margin-left: -1px; }
.tray { margin-left: auto; width: 350px; display: flex; align-items: center; }
.hasil { margin-left: 9px; width: 31px; font-size: 14px; letter-spacing: -.4px; }
.up { margin-left: 24px; } .bt { margin-left: 12px; } .bat { margin-left: 11px; } .snd { margin-left: 7px; } .cam { margin-left: 10px; } .kb { margin-left: 10px; }
.clock { width: 60px; margin-left: 7px; text-align: center; line-height: 18px; font-size: 12px; letter-spacing: -.4px; }
.note { margin-left: 14px; }
```
FILE: script.js
```js
const heads = ["Code", "Description", "Size", "Waist", "Bust", "Buying", "Selling", "Profit", "Paid date", "Courier"];
const rows = `4|A01|Bikini Jangkar Kapal Blue Green (9M) --|M|87-95|83|25,000.00|50,000.00|100%|6/1/2023|J&T
5|A02|Bikini White Brown Polkadot (11L) --|L|92-100|86|25,000.00|50,000.00|100%|1/8/2023|SiCepat
6|A03|Bikini Line Rainbow (38)|S|38|85|25,000.00|50,000.00|100%|1/8/2023|SiCepat
7|A04|Bikini Blue Grey Salur NAKANO (11L)|L|92-100|86|25,000.00|50,000.00|100%|1/8/2023|SiCepat
8|A05|Bikini Orange Polos Rajut (9M)|S|87-95|83|25,000.00|50,000.00|100%|1/15/2023|Lion Parcel
9|A06|Bikini Motif Kotak-Kotak Yellow Gray (7S)|S|82-90|80|25,000.00|50,000.00|100%|1/15/2023|SiCepat
10|A07|Bikini Orange bunga Size M (1 Set = 3 pcs)|M|87-95|75-84|40,000.00|65,000.00|63%|2/4/2023|J&T
11|A08|Bikini Biru putih Size 11L ( 1 set = 4 pcs) Like New|L|92-100|86|40,000.00|80,000.00|100%|2/5/2023|J&T
12|A09|Bikini Polkadot White Blue (Minus : Sedit Kotor bagian furing) (1|L|92-100|86|25,000.00|50,000.00|100%|2/5/2023|SiCepat
13|A10|Bikini Batik Black Grey (XL)|XL|80|74-77|25,000.00|50,000.00|100%|2/6/2023|JNE
14|A11|Bikini Green Army INLET (9M)|M|87-95|83|25,000.00|50,000.00|100%|5/2/2023|Lion Parcel
15|A12|Bikini Pink Dark Blue Tali Polos ( M)|M|70|Adjustable|25,000.00|50,000.00|100%|6/2/2023|SiCepat
20|A17|Bikini Black Polos I LOVE BIKINI (Minus : sedikit kotor bagian atas|M|87|76|25,000.00|50,000.00|100%|5/2/2023|J&T
24|A21|Bikini Pink Polos (M)|M|87-93|75-79|25,000.00|50,000.00|100%|6/2/2023|J&T
25|A22|Bikini Goni Blue kotak-kotak (9M)|M|87-95|83|25,000.00|50,000.00|100%|5/2/2023|SiCepat
26|A23|Bikini Red White 04 (9M)/ Celana (7S)|S|82-95|80-83|25,000.00|50,000.00|100%|5/2/2023|J&T
27|A24|Bikini Red Flower Renda JILSTUART (9M)|M|87-95|83 adjustable|25,000.00|50,000.00|100%|5/2/2023|Lion Parcel
28|A25|Bikini Black Polos RIPPLE (L)|L|92|80-84|25,000.00|60,000.00|140%|5/2/2023|J&T
29|A26|Bikini Black Yellowish Salur ( M)|M|87-93|75-79|25,000.00|50,000.00|100%|5/2/2023|SiCepat
33|A30|Bikini Pink White Salur (M)|M|85-90|85-90|25,000.00|50,000.00|100%|3/12/2023|Lion Parcel
34|A31|Bikini Polkadot Brown Blue White ( 9M)|M|87-95|83|25,000.00|50,000.00|100%|3/15/2024|J&T`.split("\n");
const body = document.querySelector("#grid tbody");
const arrow = '<svg width="8" height="6" viewBox="0 0 8 6"><path d="M0 1h8L4 5z" fill="#555"/></svg>';
const funnel = '<svg width="12" height="9" viewBox="0 0 12 9"><path d="M3 0h9v1L9 4v5L6.500 7.500V4L3 1zM0 5h5L2.500 7.500z" fill="#444"/></svg>';

function addRow(cls) {
  const tr = body.insertRow();
  tr.className = cls;
  return tr;
}
function addCell(tr, cls, text) {
  const td = tr.insertCell();
  td.className = cls;
  td.textContent = text;
  return td;
}
const head = addRow("head");
addCell(head, "rn", "3");
heads.forEach((h, i) => {
  const td = addCell(head, "hd", h);
  if (i < 9) td.insertAdjacentHTML("beforeend", "<b>" + (i === 8 ? funnel : arrow) + "</b>");
});
const kinds = ["rn", "l", "l w", "r", "l", "l", "m", "m", "r", "r", "l w"];
rows.forEach(line => {
  const tr = addRow("row");
  const cells = line.split("|");
  cells.forEach((text, i) => {
    let cls = kinds[i];
    if (i === 0 && text === "24") cls += " cur";
    if (i === 5) cls += /[a-z]/i.test(text) ? " s e" : " s";
    if (i === 8 && cells[0] !== "5") cls += " flag";
    addCell(tr, cls, text);
  });
});
```
